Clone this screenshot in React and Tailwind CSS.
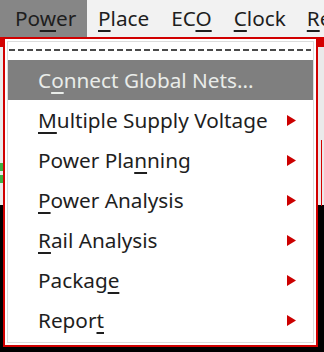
import React from "react";

const font = { fontFamily: '"Noto Sans", "Open Sans", sans-serif' };

function U({ children }) {
  return <span className="underline decoration-[2px] underline-offset-[4px]">{children}</span>;
}

function Arrow() {
  return (
    <svg width="9" height="11" viewBox="0 0 9 11" className="shrink-0">
      <polygon points="0,0 9,5.5 0,11" fill="#cc0000" />
    </svg>
  );
}

const items = [
  { label: <>C<U>o</U>nnect Global Nets...</>, active: true, arrow: false },
  { label: <><U>M</U>ultiple Supply Voltage</>, arrow: true },
  { label: <>Power Pla<U>n</U>ning</>, arrow: true },
  { label: <><U>P</U>ower Analysis</>, arrow: true },
  { label: <><U>R</U>ail Analysis</>, arrow: true },
  { label: <>Packag<U>e</U></>, arrow: true },
  { label: <>Repor<U>t</U></>, arrow: true },
];

export default function App() {
  return (
    <div className="relative w-[324px] h-[352px] overflow-hidden bg-black text-[20.75px]" style={font}>
      {/* menubar */}
      <div className="flex h-[37px] items-stretch bg-[#f2f2f2] text-[#1e1e1e] leading-none whitespace-nowrap">
        <div className="flex w-[87px] shrink-0 items-center bg-[#868686] pl-[15px]">
          <span>Po<U>w</U>er</span>
        </div>
        <div className="flex shrink-0 items-center pl-[11px] pr-[11px]"><span><U>P</U>lace</span></div>
        <div className="flex shrink-0 items-center px-[11px]"><span>EC<U>O</U></span></div>
        <div className="flex shrink-0 items-center px-[11px]"><span><U>C</U>lock</span></div>
        <div className="flex shrink-0 items-center px-[10px]"><span><U>R</U>eport</span></div>
      </div>
      {/* background app area */}
      <div className="flex h-[168px] flex-col bg-[#e6e6e6]">
        <div className="h-[10px] bg-[#d40000]" />
        <div className="flex-1 bg-[#eaeaea]" />
      </div>
      <div className="absolute left-0 top-[163px] h-[8px] w-[3px] bg-[#3cb043]" />
      <div className="absolute left-0 top-[175px] h-[8px] w-[3px] bg-[#3cb043]" />
      <div className="absolute right-[2px] top-[140px] h-[66px] w-[1px] bg-[#d40000]" />

      {/* dropdown menu */}
      <div className="absolute left-[3px] top-[37px] h-[310px] w-[315px] border-2 border-[#d10000] bg-white p-[2px]">
        <div className="h-full border border-[#dcdcdc] bg-white">
          <div className="flex h-[18px] items-start px-[1px] pt-[7px]">
            <svg width="302" height="2" className="block">
              <line x1="0" y1="1" x2="302" y2="1" stroke="#4a4a4a" strokeWidth="2" strokeDasharray="6 3" />
            </svg>
          </div>
          {items.map((it, i) => (
            <div
              key={i}
              className={
                "flex h-[40px] items-center justify-between whitespace-nowrap pl-[30px] pr-[17px] " +
                (it.active ? "bg-[#7f7f7f] text-[#e9ece9]" : "text-[#1e1e1e]")
              }
            >
              <span className="leading-none">{it.label}</span>
              {it.arrow && <Arrow />}
            </div>
          ))}
        </div>
      </div>
    </div>
  );
}
